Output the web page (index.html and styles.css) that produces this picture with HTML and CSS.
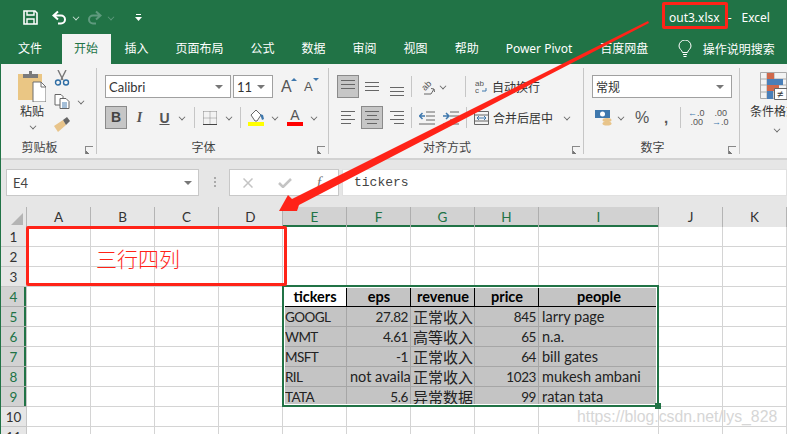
FILE: index.html
```html
<!DOCTYPE html>
<html lang="en">

<head>
    <meta charset="UTF-8">
    <title>out3.xlsx - Excel</title>
    <link rel="stylesheet" href="styles.css">
</head>

<body>
    <div class="app">
        <!-- Title bar -->
        <div class="titlebar">
            <svg class="qa-save" viewBox="0 0 15 15" width="15" height="15">
                <path d="M1 1h11l2 2v11H1z" fill="none" stroke="#fff" stroke-width="1.6" />
                <path d="M4 1v4h7V1M4 14V9h7v5" fill="none" stroke="#fff" stroke-width="1.4" />
            </svg>
            <svg class="qa-undo" viewBox="0 0 15 15" width="15" height="15">
                <path d="M6 1.5 1.5 5.5 6 9.5M2 5.5h7a4 4 0 0 1 0 8H6" fill="none" stroke="#fff" stroke-width="2" />
            </svg>
            <span class="chev chev-light qa-c1"></span>
            <svg class="qa-redo" viewBox="0 0 15 15" width="15" height="15">
                <path d="M9 1.5 13.5 5.5 9 9.5M13 5.5H6a4 4 0 0 0 0 8h3" fill="none" stroke="#5f9a7e" stroke-width="2" />
            </svg>
            <span class="chev chev-dim qa-c2"></span>
            <svg class="qa-more" viewBox="0 0 7 7" width="7" height="7">
                <path d="M1 0h5v1H1zM0 3h7L3.5 7z" fill="#fff" />
            </svg>
            <span class="doc-name">out3.xlsx</span>
            <span class="doc-dash">-</span>
            <span class="doc-app">Excel</span>
        </div>

        <!-- Tabs -->
        <div class="tabs">
            <span class="tab">文件</span>
            <span class="tab tab-active">开始</span>
            <span class="tab">插入</span>
            <span class="tab">页面布局</span>
            <span class="tab">公式</span>
            <span class="tab">数据</span>
            <span class="tab">审阅</span>
            <span class="tab">视图</span>
            <span class="tab">帮助</span>
            <span class="tab tab-pivot">Power Pivot</span>
            <span class="tab">百度网盘</span>
            <svg class="bulb" viewBox="0 0 14 18" width="14" height="18">
                <path d="M4.5 12.5C4 10 1 9 1 6a6 6 0 0 1 12 0c0 3-3 4-3.500 6.500z" fill="none" stroke="#fff" />
                <path d="M5 14.500h4M5.500 16.500h3" stroke="#fff" />
            </svg>
            <span class="tell-me">操作说明搜索</span>
        </div>

        <!-- Ribbon -->
        <div class="ribbon">
            <div class="group group-clip">
                <div class="clip-body">
                    <div class="paste">
                        <svg viewBox="0 0 28 32" width="28" height="32">
                            <path d="M0 4h24v26H0z" fill="#eac684" />
                            <path d="M8 4h3V1h3v3h6v4H5V4z" fill="#7a7a7a" />
                            <path d="M15 12h8l5 5v15H15z" fill="#fff" stroke="#6e6e6e" />
                            <path d="M23 12v5h5" fill="none" stroke="#6e6e6e" />
                        </svg>
                        <span class="paste-text">粘贴</span>
                        <span class="chev"></span>
                    </div>
                    <div class="clip-tools">
                        <svg viewBox="0 0 16 16" width="16" height="16">
                            <path d="M4 0l5 10M12 0 7 10" stroke="#777" stroke-width="1.4" fill="none" />
                            <circle cx="4" cy="12.500" r="2.500" fill="none" stroke="#2f6ea5" stroke-width="1.400" />
                            <circle cx="12" cy="12.500" r="2.500" fill="none" stroke="#2f6ea5" stroke-width="1.400" />
                        </svg>
                        <div class="copy-row">
                            <svg viewBox="0 0 16 15" width="16" height="15">
                                <path d="M1 .5h6l2 2V11H1z" fill="#fff" stroke="#666" />
                                <path d="M6 4.500h6l3 3v7H6z" fill="#fff" stroke="#666" />
                                <path d="M8 9h5M8 11h5M8 13h5" stroke="#4a7fb0" />
                            </svg>
                            <span class="chev ml-7"></span>
                        </div>
                        <svg viewBox="0 0 16 15" width="16" height="15">
                            <path d="M0 9 9 3l3 5-8 7z" fill="#e8c48a" />
                            <path d="M9 3l4-3 3 4-4 4z" fill="#666" />
                        </svg>
                    </div>
                </div>
                <div class="group-label">剪贴板</div>
                <span class="launcher"></span>
            </div>

            <div class="group group-font">
                <div class="row">
                    <div class="select select-font">Calibri<span class="tri"></span></div>
                    <div class="select select-size ml-2">11<span class="tri"></span></div>
                    <span class="grow-a ml-8">A<i class="tip tip-up"></i></span>
                    <span class="shrink-a ml-11">A<i class="tip tip-down"></i></span>
                </div>
                <div class="row row-two">
                    <span class="btn-on btn-bold">B</span>
                    <span class="text-tool text-i ml-7">I</span>
                    <span class="text-tool text-u ml-14">U</span>
                    <span class="chev ml-8"></span>
                    <span class="sep ml-9"></span>
                    <svg class="ml-8" viewBox="0 0 14 14" width="14" height="14">
                        <path d="M.5.500h13M.5 7h13M7 .5v13M.5.500v13M13.500.5v13" stroke="#888" stroke-dasharray="1 1" fill="none" />
                        <path d="M0 13.500h14" stroke="#444" />
                    </svg>
                    <span class="chev ml-8"></span>
                    <span class="sep ml-8"></span>
                    <div class="swatch-tool ml-7">
                        <svg viewBox="0 0 16 12" width="16" height="12">
                            <path d="M3 5 8 0l5 5-4 6H7z" fill="#fff" stroke="#666" />
                            <path d="M12 4l3 1 1 4-2 1z" fill="#3f78ad" />
                        </svg>
                        <i class="swatch swatch-yellow"></i>
                    </div>
                    <span class="chev ml-7"></span>
                    <div class="swatch-tool ml-9">
                        <span class="swatch-a">A</span>
                        <i class="swatch swatch-red"></i>
                    </div>
                    <span class="chev ml-7"></span>
                </div>
                <div class="group-label">字体</div>
                <span class="launcher"></span>
            </div>

            <div class="group group-align">
                <div class="row">
                    <span class="btn-on btn-lines lines-top"><i></i><i></i><i></i></span>
                    <span class="lines lines-mid ml-6"><i></i><i></i><i></i></span>
                    <span class="lines lines-bottom ml-11"><i></i><i></i><i></i></span>
                    <span class="sep ml-7"></span>
                    <svg class="ml-7" viewBox="0 0 16 16" width="16" height="16">
                        <text x="3" y="11" transform="rotate(-45 6 8)" class="orient-letters">ab</text>
                        <path d="M5 15h7l3-5M12 9.500l3 .5.500 3" stroke="#666" fill="none" />
                    </svg>
                    <span class="chev ml-4"></span>
                    <span class="sep ml-19"></span>
                    <svg class="ml-9" viewBox="0 0 12 15" width="12" height="15">
                        <text x="0" y="6.500" class="wrap-letters">ab</text>
                        <text x="0" y="14" class="wrap-letters">c</text>
                        <path d="M11 9v3H7" stroke="#3f78ad" fill="none" />
                    </svg>
                    <span class="ribbon-text ml-5">自动换行</span>
                </div>
                <div class="row row-two">
                    <span class="lines lines-left ml-4"><i></i><i></i><i></i><i></i></span>
                    <span class="btn-on btn-lines lines-center ml-6"><i></i><i></i><i></i><i></i></span>
                    <span class="lines lines-right ml-7"><i></i><i></i><i></i><i></i></span>
                    <span class="sep ml-7"></span>
                    <svg class="ml-7" viewBox="0 0 16 14" width="16" height="14">
                        <path d="M7 1h9M7 5h9M7 9h9M0 13h16" stroke="#666" fill="none" />
                        <path d="M6 5H1M3.500 2 .5 5l3 3" stroke="#3f78ad" stroke-width="1.500" fill="none" />
                    </svg>
                    <svg class="ml-8" viewBox="0 0 16 14" width="16" height="14">
                        <path d="M7 1h9M7 5h9M7 9h9M0 13h16" stroke="#666" fill="none" />
                        <path d="M0 5h6M3 2l3 3-3 3" stroke="#3f78ad" stroke-width="1.500" fill="none" />
                    </svg>
                    <span class="sep ml-7"></span>
                    <svg class="ml-7" viewBox="0 0 15 14" width="15" height="14">
                        <path d="M.5.500h14v13H.500zM.5 4h14M.5 10h14" fill="none" stroke="#666" />
                        <path d="M3 7h9M5 5 3 7l2 2M10 5l2 2-2 2" fill="none" stroke="#3f78ad" />
                    </svg>
                    <span class="ribbon-text ml-4">合并后居中</span>
                    <span class="chev ml-10"></span>
                </div>
                <div class="group-label">对齐方式</div>
                <span class="launcher"></span>
            </div>

            <div class="group group-number">
                <div class="row">
                    <div class="select select-format">常规<span class="tri"></span></div>
                </div>
                <div class="row row-two">
                    <svg class="ml-3" viewBox="0 0 17 17" width="17" height="17">
                        <path d="M0 1h15v8H0z" fill="#3f78ad" />
                        <circle cx="7.500" cy="5" r="2.500" fill="#fff" />
                        <ellipse cx="12" cy="11" rx="4.500" ry="2" fill="#e8c48a" />
                        <ellipse cx="12" cy="14.500" rx="4.500" ry="2" fill="#e8c48a" />
                    </svg>
                    <span class="chev ml-5"></span>
                    <span class="percent ml-11">%</span>
                    <span class="comma ml-14">,</span>
                    <span class="sep ml-13"></span>
                    <span class="dec ml-7"><b class="dec-arrow">←</b>.0<br>.00</span>
                    <span class="dec ml-9">.00<br><b class="dec-arrow">→</b>.0</span>
                </div>
                <div class="group-label">数字</div>
                <span class="launcher"></span>
            </div>

            <div class="group-styles">
                <svg viewBox="0 0 27 28" width="27" height="28">
                    <path d="M.5.500h26v26H.500zM.5 7h26M.5 13h26M.5 20h26M7 .5v26M14 .5v26" fill="none" stroke="#aaa" />
                    <path d="M7 1h7v6H7z" fill="#d0694b" />
                    <path d="M7 7h16v6H7z" fill="#4a7fb8" />
                    <path d="M7 13h12v6H7z" fill="#d0694b" />
                    <path d="M7 19h6v8H7z" fill="#4a7fb8" />
                    <path d="M14.500 16.500H27v11H14.500z" fill="#fff" stroke="#666" />
                    <text x="17" y="26" class="neq">≠</text>
                </svg>
                <span class="ribbon-text styles-text">条件格式</span>
                <span class="chev styles-chev"></span>
            </div>
        </div>

        <!-- Formula bar -->
        <div class="formula-bar">
            <div class="name-box">E4<span class="tri"></span></div>
            <span class="grip"><i></i><i></i><i></i></span>
            <div class="fx-box">
                <svg class="fx-cancel" viewBox="0 0 10 10" width="10" height="10">
                    <path d="M.5.500l9 9M9.500.500l-9 9" stroke="#c4c4c4" stroke-width="1.500" fill="none" />
                </svg>
                <svg class="fx-ok" viewBox="0 0 14 10" width="14" height="10">
                    <path d="M1 5l4 4 8-8" stroke="#c4c4c4" stroke-width="2.500" fill="none" />
                </svg>
                <span class="fx-f">f</span>
            </div>
            <div class="formula-input">tickers</div>
        </div>

        <!-- Sheet -->
        <table class="sheet">
            <colgroup>
                <col class="col-head">
                <col class="col-std"><col class="col-std"><col class="col-std"><col class="col-std">
                <col class="col-std"><col class="col-std"><col class="col-std"><col class="col-std">
                <col class="col-wide">
                <col class="col-std"><col class="col-std">
            </colgroup>
            <tr class="head-row">
                <th class="corner"><i></i></th>
                <th>A</th><th>B</th><th>C</th><th>D</th>
                <th class="on">E</th><th class="on">F</th><th class="on">G</th><th class="on">H</th><th class="on">I</th>
                <th>J</th><th>K</th>
            </tr>
            <tr><th>1</th><td></td><td></td><td></td><td></td><td></td><td></td><td></td><td></td><td></td><td></td><td></td></tr>
            <tr><th>2</th><td></td><td></td><td></td><td></td><td></td><td></td><td></td><td></td><td></td><td></td><td></td></tr>
            <tr><th>3</th><td></td><td></td><td></td><td></td><td></td><td></td><td></td><td></td><td></td><td></td><td></td></tr>
            <tr class="title-row">
                <th class="on">4</th><td></td><td></td><td></td><td></td>
                <td class="data active">tickers</td><td class="data">eps</td><td class="data">revenue</td><td class="data">price</td><td class="data">people</td>
                <td></td><td></td>
            </tr>
            <tr>
                <th class="on">5</th><td></td><td></td><td></td><td></td>
                <td class="data tick">GOOGL</td><td class="data num digits">27.82</td><td class="data cjk">正常收入</td><td class="data num digits">845</td><td class="data">larry page</td>
                <td></td><td></td>
            </tr>
            <tr>
                <th class="on">6</th><td></td><td></td><td></td><td></td>
                <td class="data tick">WMT</td><td class="data num digits">4.61</td><td class="data cjk">高等收入</td><td class="data num digits">65</td><td class="data">n.a.</td>
                <td></td><td></td>
            </tr>
            <tr>
                <th class="on">7</th><td></td><td></td><td></td><td></td>
                <td class="data tick">MSFT</td><td class="data num digits">-1</td><td class="data cjk">正常收入</td><td class="data num digits">64</td><td class="data">bill gates</td>
                <td></td><td></td>
            </tr>
            <tr>
                <th class="on">8</th><td></td><td></td><td></td><td></td>
                <td class="data tick">RIL</td><td class="data num">not availa</td><td class="data cjk">正常收入</td><td class="data num digits">1023</td><td class="data">mukesh ambani</td>
                <td></td><td></td>
            </tr>
            <tr>
                <th class="on">9</th><td></td><td></td><td></td><td></td>
                <td class="data tick">TATA</td><td class="data num digits">5.6</td><td class="data cjk">异常数据</td><td class="data num digits">99</td><td class="data">ratan tata</td>
                <td></td><td></td>
            </tr>
            <tr><th>10</th><td></td><td></td><td></td><td></td><td></td><td></td><td></td><td></td><td></td><td></td><td></td></tr>
            <tr><th>11</th><td></td><td></td><td></td><td></td><td></td><td></td><td></td><td></td><td></td><td></td><td></td></tr>
        </table>

        <!-- Selection and red annotations lie over everything -->
        <div class="selection"><span class="handle"></span></div>
        <div class="mark mark-title"></div>
        <div class="mark mark-range"></div>
        <div class="mark-text">三行四列</div>
        <svg class="arrow" viewBox="0 0 787 434" width="787" height="434">
            <polygon points="648,21 292,199 288,195 279,211 297,211 299,205 649,23" fill="#ff2318" />
        </svg>
        <div class="watermark">https://blog.csdn.net/lys_828</div>
    </div>
</body>

</html>
```

FILE: styles.css
```css
* {
    margin: 0;
    padding: 0;
    box-sizing: border-box;
}

body {
    width: 787px;
    height: 434px;
    overflow: hidden;
    background: #fff;
    font-family: "Noto Sans", "Noto Sans CJK SC", sans-serif;
    font-size: 12px;
    color: #333;
}

.app {
    position: relative;
    width: 787px;
    height: 434px;
    overflow: hidden;
    border-left: 1px solid #217346;
}

/* Title bar */
.titlebar {
    display: flex;
    align-items: center;
    height: 34px;
    margin-left: -1px;
    padding-left: 23px;
    background: #217346;
    color: #fff;
    font-size: 12px;
}

.qa-undo { margin-left: 14px; }
.qa-c1 { margin-left: 5px; }
.qa-redo { margin-left: 8px; }
.qa-c2 { margin-left: 5px; }
.qa-more { margin-left: 21px; }

.doc-name { margin-left: 527px; }
.doc-dash { margin-left: 8px; }
.doc-app { margin-left: 10px; }

/* Tabs */
.tabs {
    display: flex;
    align-items: center;
    height: 30px;
    margin-left: -1px;
    padding-left: 4.5px;
    background: #217346;
    color: #fff;
    white-space: nowrap;
}

.tab {
    padding: 0 13.5px;
    line-height: 30px;
}

.tab-active {
    margin-left: 6px;
    padding: 0 13px 0 12.500px;
    background: #f3f3f3;
    color: #217346;
}

.tab-pivot { margin-right: 1px; }

.bulb { margin-left: 16px; }
.tell-me { margin-left: 11px; }

/* Ribbon */
.ribbon {
    display: flex;
    height: 96px;
    background: #f3f3f3;
    border-bottom: 2px solid #d2d2d2;
}

.group {
    position: relative;
    display: flex;
    flex-direction: column;
    height: 86px;
    margin-top: 4px;
    padding: 7px 0 0 8px;
    border-right: 1px solid #c6c6c6;
}

.group-clip { width: 96px; padding: 2px 0 0 0; }
.group-font { width: 232px; }
.group-align { width: 255px; }
.group-number { width: 156px; }

.group-label {
    position: absolute;
    left: 0;
    right: 18px;
    bottom: -1px;
    line-height: 14px;
    text-align: center;
    color: #444;
}

.launcher {
    position: absolute;
    right: 3px;
    bottom: 0;
    width: 8px;
    height: 8px;
    border-left: 1px solid #888;
    border-top: 1px solid #888;
    background: linear-gradient(45deg, #777 0 25%, transparent 25%);
}

.row {
    display: flex;
    align-items: center;
    height: 23px;
}

.row-two { margin-top: 8px; }

.ml-2 { margin-left: 2px; }
.ml-3 { margin-left: 3px; }
.ml-4 { margin-left: 4px; }
.ml-5 { margin-left: 5px; }
.ml-6 { margin-left: 6px; }
.ml-7 { margin-left: 7px; }
.ml-8 { margin-left: 8px; }
.ml-9 { margin-left: 9px; }
.ml-10 { margin-left: 10px; }
.ml-11 { margin-left: 11px; }
.ml-13 { margin-left: 13px; }
.ml-14 { margin-left: 14px; }
.ml-19 { margin-left: 19px; }

.chev {
    display: inline-block;
    flex: none;
    width: 7px;
    height: 7px;
    position: relative;
}

.chev::after {
    content: "";
    position: absolute;
    left: 1px;
    top: 0;
    width: 5px;
    height: 5px;
    border-right: 1px solid #666;
    border-bottom: 1px solid #666;
    transform: rotate(45deg) scale(.8);
}

.chev-light::after { border-color: #cfe3d8; }
.chev-dim::after { border-color: #5f9a7e; }

.tri {
    width: 0;
    height: 0;
    border-left: 4px solid transparent;
    border-right: 4px solid transparent;
    border-top: 4px solid #777;
}

.sep {
    flex: none;
    width: 1px;
    height: 21px;
    background: #c6c6c6;
}

/* Clipboard */
.clip-body {
    display: flex;
    padding-left: 17px;
}

.paste {
    display: flex;
    flex-direction: column;
    align-items: center;
    width: 28px;
}

.paste-text {
    margin-top: 1px;
    line-height: 18px;
    color: #333;
}

.paste .chev { margin-top: 2px; }

.clip-tools {
    display: flex;
    flex-direction: column;
    gap: 8px;
    margin-left: 8px;
}

.copy-row {
    display: flex;
    align-items: center;
    width: 32px;
}

/* Font */
.select {
    display: flex;
    align-items: center;
    justify-content: space-between;
    height: 23px;
    padding: 0 7px 0 3px;
    background: #fff;
    border: 1px solid #a0a0a0;
    font-family: "Lato", sans-serif;
    font-size: 13px;
    color: #333;
}

.select-font { width: 126px; }
.select-size { width: 40px; }
.select-format {
    width: 140px;
    font-family: "Noto Sans CJK SC", sans-serif;
    font-size: 12px;
}

.grow-a,
.shrink-a {
    position: relative;
    font-family: "Liberation Sans", sans-serif;
    color: #555;
}

.grow-a { font-size: 16px; width: 12px; }
.shrink-a { font-size: 13px; width: 10px; }

.tip {
    position: absolute;
    left: 100%;
    border-left: 3px solid transparent;
    border-right: 3px solid transparent;
}

.grow-a .tip { top: 0; margin-left: -2px; }
.shrink-a .tip { top: -1px; margin-left: -1px; }
.tip-up { border-bottom: 3px solid #3f78ad; }
.tip-down { border-top: 3px solid #3f78ad; }

.btn-on {
    flex: none;
    width: 22px;
    height: 23px;
    background: #c6c6c6;
    border: 1px solid #8a8a8a;
}

.btn-bold {
    text-align: center;
    font: bold 14px/21px "Liberation Sans", sans-serif;
    color: #444;
}

.text-tool {
    width: 11px;
    text-align: center;
    font-family: "Liberation Sans", sans-serif;
    font-size: 14px;
    font-weight: bold;
    color: #555;
}

.text-i {
    font-family: "Liberation Serif", serif;
    font-style: italic;
}

.text-u { text-decoration: underline; }

.swatch-tool {
    display: flex;
    flex-direction: column;
    width: 16px;
    height: 17px;
    justify-content: flex-end;
}

.swatch {
    display: block;
    flex: none;
    height: 4px;
}

.swatch-yellow { background: #ffff00; }
.swatch-red { background: #ff0000; }

.swatch-a {
    text-align: center;
    font: 14px/13px "Liberation Sans", sans-serif;
    color: #555;
}

/* Alignment lines, built from stacked bars */
.lines,
.btn-lines {
    display: flex;
    flex-direction: column;
    flex: none;
    gap: 3px;
    height: 23px;
    justify-content: center;
}

.lines { width: 14px; }

.lines i,
.btn-lines i {
    display: block;
    height: 1px;
    background: #666;
}

.lines-top { justify-content: flex-start; padding: 4px 3px 0; }
.lines-bottom { justify-content: flex-end; padding-bottom: 2px; }
.lines-center { padding: 0 3px; }
.lines-left i:nth-child(even) { width: 10px; }
.lines-center i:nth-child(even) { width: 10px; align-self: center; }
.lines-right i:nth-child(even) { width: 10px; align-self: flex-end; }

.wrap-letters {
    font: 8px "Liberation Sans", sans-serif;
    fill: #555;
}

.orient-letters {
    font: 9px "Liberation Sans", sans-serif;
    fill: #555;
}

.ribbon-text {
    color: #333;
    white-space: nowrap;
}

/* Number */
.percent {
    width: 12px;
    font: 16px "Liberation Sans", sans-serif;
    color: #555;
}

.comma {
    width: 4px;
    margin-left: 17px;
    font: bold 15px/10px "Liberation Sans", sans-serif;
    color: #555;
}

.comma + .sep { margin-left: 12px; }

.dec {
    flex: none;
    width: 15px;
    font: 9px/9px "Liberation Sans", sans-serif;
    color: #555;
    text-align: right;
}

.dec-arrow {
    font-weight: normal;
    color: #3f78ad;
}

/* Styles, cut by the window edge */
.group-styles {
    display: flex;
    flex-direction: column;
    width: 47px;
    padding: 8px 0 0 20px;
    overflow: hidden;
}

.group-styles svg { flex: none; }

.styles-text {
    margin: 4px 0 0 -10px;
    line-height: 16px;
}

.styles-chev { margin: 6px 0 0 13px; }

.neq {
    font: 11px "Liberation Sans", sans-serif;
    fill: #333;
}

/* Formula bar */
.formula-bar {
    display: flex;
    align-items: flex-start;
    height: 47px;
    padding: 9px 0 0 5px;
    background: #e6e6e6;
}

.name-box {
    display: flex;
    align-items: center;
    justify-content: space-between;
    width: 193px;
    height: 27px;
    padding: 0 6px;
    background: #fff;
    border: 1px solid #c8c8c8;
    font-family: "Lato", sans-serif;
    font-size: 13px;
    color: #444;
}

.grip {
    display: flex;
    flex-direction: column;
    gap: 2px;
    margin: 8px 0 0 15px;
}

.grip i {
    display: block;
    width: 2px;
    height: 2px;
    background: #aaa;
}

.fx-box {
    display: flex;
    align-items: center;
    width: 110px;
    height: 27px;
    margin-left: 13px;
    background: #fff;
    border: 1px solid #c8c8c8;
    color: #c4c4c4;
}

.fx-cancel { margin-left: 13px; }
.fx-ok { margin-left: 25px; }

.fx-f {
    margin-left: 25px;
    font-family: "Liberation Serif", serif;
    font-size: 15px;
    font-style: italic;
    color: #777;
}

.formula-input {
    flex: 1;
    height: 27px;
    margin-left: 3px;
    padding-left: 11px;
    background: #fff;
    border: 1px solid #e0e0e0;
    font: 13px/26px "Liberation Mono", monospace;
    color: #444;
}

/* Sheet */
.sheet {
    width: 786px;
    table-layout: fixed;
    border-collapse: separate;
    border-spacing: 0;
    font-family: "Lato", "Noto Sans CJK SC", sans-serif;
    font-size: 14.500px;
    color: #222;
}

.col-head { width: 26px; }
.col-std { width: 64px; }
.col-wide { width: 120px; }

.sheet tr { height: 20px; }

.sheet th {
    padding: 0;
    background: #e6e6e6;
    border-right: 1px solid #c6c6c6;
    border-bottom: 1px solid #c6c6c6;
    font-weight: normal;
    font-size: 13.500px;
    line-height: 18px;
    color: #333;
}

.head-row th {
    border-bottom: 0;
    border-right: 1px solid #b4b4b4;
}

.sheet th.on {
    background: #d2d2d2;
    border-bottom-color: #aeaeae;
    color: #217346;
    box-shadow: inset -2px 0 #217346;
}

.head-row th.on {
    border-right-color: #aeaeae;
    box-shadow: inset 0 -2px #217346;
}

.corner {
    position: relative;
}

.corner i {
    position: absolute;
    right: 3px;
    bottom: 2px;
    width: 0;
    height: 0;
    border-left: 12px solid transparent;
    border-bottom: 12px solid #b4b4b4;
}

.sheet td {
    padding: 0 2px 0 3px;
    border-right: 1px solid #d4d4d4;
    border-bottom: 1px solid #d4d4d4;
    line-height: 18px;
    white-space: nowrap;
    overflow: hidden;
}

.sheet td.data {
    background: #c4c4c4;
    border-color: #a6a6a6;
}

.title-row td.data {
    text-align: center;
    font-weight: bold;
    border-right-color: #000;
    border-bottom-color: #000;
    color: #000;
}

.sheet td.active { background: #fff; }
.sheet td.num { text-align: right; }

.sheet td.digits {
    font-size: 13.500px;
    letter-spacing: -.4px;
}

.sheet td.tick {
    padding-left: 2px;
    font-size: 13.500px;
    letter-spacing: -.6px;
}

.sheet td.cjk {
    padding: 0 0 0 2px;
    font-size: 15px;
}

/* Overlays */
.selection {
    position: absolute;
    left: 281px;
    top: 285px;
    width: 377px;
    height: 122px;
    border: 2px solid #217346;
    box-shadow: inset 0 0 0 1px #fff;
}

.handle {
    position: absolute;
    right: -4px;
    bottom: -4px;
    width: 6px;
    height: 6px;
    background: #217346;
}

.mark {
    position: absolute;
    border: 3px solid #ff2318;
    border-radius: 2px;
}

.mark-title {
    left: 661px;
    top: 2px;
    width: 66px;
    height: 27px;
}

.mark-range {
    left: 25px;
    top: 226px;
    width: 261px;
    height: 60px;
}

.mark-text {
    position: absolute;
    left: 95px;
    top: 244px;
    font-family: "Noto Sans CJK SC", sans-serif;
    font-size: 21px;
    font-weight: 300;
    line-height: 28px;
    color: #ff2318;
}

.arrow {
    position: absolute;
    left: -1px;
    top: 0;
}

.watermark {
    position: absolute;
    left: 576px;
    top: 407px;
    font-family: "Liberation Sans", sans-serif;
    font-size: 15.800px;
    line-height: 20px;
    color: #d6d6d6;
}
```
